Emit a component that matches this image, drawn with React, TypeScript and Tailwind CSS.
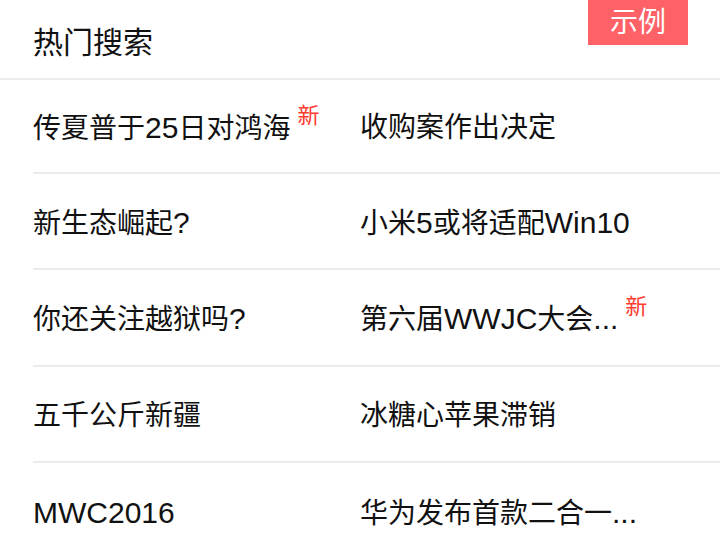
const FONT = 'font-["Liberation_Sans","Noto_Sans_CJK_SC",sans-serif]'

interface Item {
  text: string
  isNew?: boolean
}

const ROWS: [Item, Item][] = [
  [{ text: '传夏普于25日对鸿海', isNew: true }, { text: '收购案作出决定' }],
  [{ text: '新生态崛起?' }, { text: '小米5或将适配Win10' }],
  [{ text: '你还关注越狱吗?' }, { text: '第六届WWJC大会...', isNew: true }],
  [{ text: '五千公斤新疆' }, { text: '冰糖心苹果滞销' }],
  [{ text: 'MWC2016' }, { text: '华为发布首款二合一...' }],
]

const ROW_HEIGHTS = ['h-[94px]', 'h-[96px]', 'h-[97px]', 'h-[96px]', 'h-[97px]']

// latin runs render a bit larger than the CJK glyphs in the original
function Mixed({ text }: { text: string }) {
  const parts = text.split(/([A-Za-z0-9.?]+)/).filter(Boolean)
  return (
    <>
      {parts.map((p, i) =>
        /^[A-Za-z0-9.?]+$/.test(p) ? (
          <span key={i} className="text-[30px]">
            {p}
          </span>
        ) : (
          <span key={i}>{p}</span>
        ),
      )}
    </>
  )
}

function Cell({ item }: { item: Item }) {
  return (
    <div className="flex items-start">
      <span className="text-[28px] leading-[30px] text-[#111]">
        <Mixed text={item.text} />
      </span>
      {item.isNew && (
        <span className="ml-[7px] -mt-[8px] text-[22px] leading-none text-[#ff3b30]">新</span>
      )}
    </div>
  )
}

export default function App() {
  return (
    <div className={`w-[720px] h-[560px] overflow-hidden bg-white ${FONT}`}>
      {/* Header */}
      <div className="relative h-[80px] border-b-2 border-[#ebebeb] flex items-center pl-[33px] pt-[8px]">
        <h1 className="text-[30px] leading-none text-[#111] font-normal">热门搜索</h1>
        <div className="absolute top-0 left-[588px] w-[100px] h-[45px] bg-[#fe6166] flex items-center justify-center text-white text-[28px] leading-none">
          示例
        </div>
      </div>

      {/* List */}
      <div className="pl-[33px]">
        {ROWS.map((row, i) => (
          <div
            key={i}
            className={`grid grid-cols-[327px_1fr] items-center pt-[4px] ${ROW_HEIGHTS[i]} ${
              i < ROWS.length - 1 ? 'border-b-2 border-[#ebebeb]' : ''
            }`}
          >
            <Cell item={row[0]} />
            <Cell item={row[1]} />
          </div>
        ))}
      </div>
    </div>
  )
}
